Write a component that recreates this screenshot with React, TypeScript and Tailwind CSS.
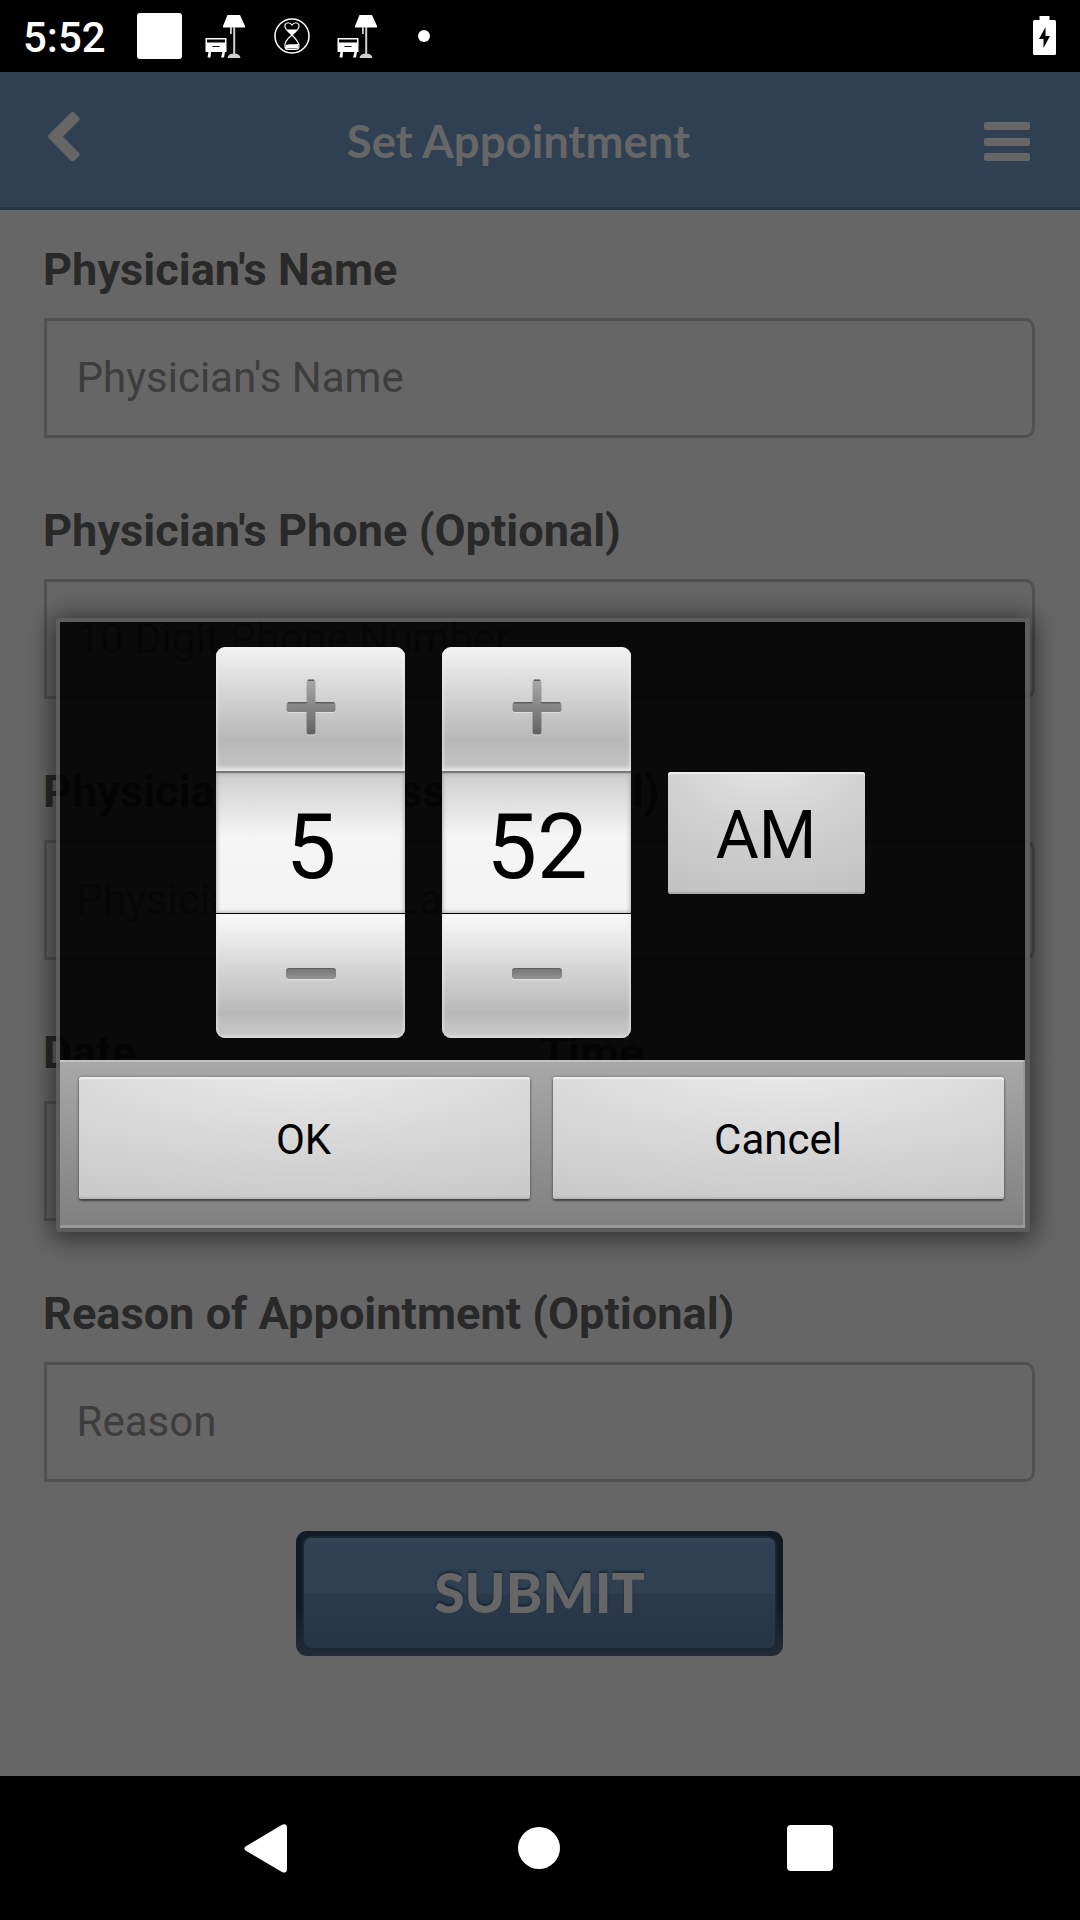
import React from "react";

function Lamp() {
  return (
    <svg width="42" height="44" viewBox="0 0 42 44" fill="white">
      <path d="M22.500 0H35L40 11V12.500H18V11Z" />
      <path d="M28.200 12H30.200V40H28.200ZM25 12H26.800V19H25ZM29 38.500C33 38.500 35 40 35.500 43H22.500C23 40 25 38.500 29 38.500Z" fill="#d0d0d0" />
      <path fillRule="evenodd" d="M0.500 23H21.500V37H20L19 42.500H16L17.500 37H6L5.500 42.500H2.500L3.500 37H0.500ZM2 24.500V27.500H20V24.500ZM7.500 31V32H14.500V31Z" />
    </svg>
  );
}

function Hourglass() {
  return (
    <svg width="38" height="38" viewBox="0 0 38 38" fill="none" stroke="white">
      <circle cx="19" cy="19" r="17" strokeWidth="1.500" />
      <path d="M19 18C14 14 11 11 12 8C13 5 17 5 19 8C21 5 25 5 26 8C27 11 24 14 19 18C14 22 11 26 12 30C12.500 32 14 32.500 15 32.500H23C25 32.500 26 31 26 29C26 26 23 22 19 18Z" strokeWidth="1.200" />
      <path d="M14 12.500H24C23 15 20.500 16 19 17.500C17.500 16 15 15 14 12.500ZM13 28C17 26.500 21 28 25 27V31.500H13Z" fill="white" stroke="none" />
    </svg>
  );
}

function StatusBar() {
  return (
    <div className="flex h-[72px] items-center bg-black pr-6 pl-[23px] text-white">
      <span className="w-[114px] pt-[3px] text-[42px] leading-none font-medium">5:52</span>
      <div className="h-[46px] w-[45px] rounded-[3px] bg-white" />
      <div className="ml-[23px] pt-0.5"><Lamp /></div>
      <div className="ml-[26px]"><Hourglass /></div>
      <div className="ml-[26px] pt-0.5"><Lamp /></div>
      <div className="ml-[39px] size-3 rounded-full bg-white" />
      <svg className="ml-auto" width="23" height="40" viewBox="0 0 23 40">
        <path d="M6.500 0H16.500V4H21.500Q23 4 23 5.500V37.500Q23 39 21.500 39H1.500Q0 39 0 37.500V5.500Q0 4 1.500 4H6.500Z" fill="white" />
        <path d="M12.500 11V20H17L10.500 32V23H6Z" fill="black" />
      </svg>
    </div>
  );
}

function Header() {
  return (
    <div className="flex h-[138px] items-center justify-between border-b-[3px] border-[#263543] bg-[#2f4052] pr-[50px] pl-12 text-[#666]">
      <svg className="mb-1.5" width="32" height="50" viewBox="0 0 32 50" fill="currentColor">
        <path d="M22.500 1Q24.500 -1 26.500 1L31 5.500Q32.500 7 31 8.500L15 24.500L31 41Q32.500 42.500 31 44L26.500 48.500Q24.500 50 22.500 48.500L0.500 26Q-.5 24.500 .5 23Z" />
      </svg>
      <h1 className="mt-0.5 mr-[27px] font-['Lato'] text-[45.500px] leading-none font-bold">Set Appointment</h1>
      <div className="mt-1 flex flex-col gap-[7.500px]">
        <div className="h-2 w-[46px] rounded-[2px] bg-[#666]" />
        <div className="h-2 w-[46px] rounded-[2px] bg-[#666]" />
        <div className="h-2 w-[46px] rounded-[2px] bg-[#666]" />
      </div>
    </div>
  );
}

function Field({ label, placeholder }: { label: string; placeholder: string }) {
  return (
    <div className="flex h-[261px] w-full shrink-0 flex-col">
      <div className="-ml-px h-[62px] pt-px text-[45.150px] leading-[53px] font-bold whitespace-nowrap text-[#292929]">{label}</div>
      <div className="mt-[14px] flex h-[120px] items-center rounded-r-[10px] border-[3px] border-[#515151] pb-0.5 pl-[29.500px] text-[42px] text-[#3d3d3d]">
        {placeholder}
      </div>
    </div>
  );
}

function Picker({ value }: { value: string }) {
  return (
    <div className="flex h-[391px] w-[189px] flex-col overflow-hidden rounded-[9px] text-black">
      <div className="flex h-[124px] shrink-0 items-center justify-center bg-linear-to-b from-[#f3f3f3] from-0% via-[#b7b7b7] via-75% to-[#c0c0c0] to-90% shadow-[inset_0_-5px_5px_-2px_#e8e8e8,inset_0_0_4px_#eee]">
        <svg className="mb-1 drop-shadow-[0_1.500px_0_#ddd]" width="50" height="56" viewBox="0 0 50 56">
          <defs>
            <linearGradient id="plus" x1="0" y1="0" x2="0" y2="1">
              <stop offset="0" stopColor="#aaa" /><stop offset="1" stopColor="#626262" />
            </linearGradient>
          </defs>
          <path d="M23 .5H27Q29.500 .5 29.500 3V23H47Q49.500 23 49.500 25.500V30.500Q49.500 33 47 33H29.500V53Q29.500 55.500 27 55.500H23Q20.500 55.500 20.500 53V33H3Q.5 33 .5 30.500V25.500Q.5 23 3 23H20.500V3Q20.500 .5 23 .5Z" fill="url(#plus)" />
          <path d="M2 23.800H20.500M29.500 23.800H48M22 1.200H28" stroke="#5c5c5c" strokeWidth="1.500" />
        </svg>
      </div>
      <div className="flex h-[142px] shrink-0 items-center justify-center border-t-2 border-[#777] bg-linear-to-b from-[#cecece] from-0% via-[#f5f5f5] via-45% to-[#f3f3f3] pt-2.5 pl-px text-[90px] leading-none shadow-[inset_0_0_5px_#999]">
        {value}
      </div>
      <div className="flex h-[125px] shrink-0 items-center justify-center border-t border-black bg-linear-to-b from-[#fafafa] from-0% via-[#b8b8b8] via-80% to-[#c6c6c6] to-95% shadow-[inset_0_-3px_4px_-1px_#ddd,inset_0_0_4px_#eee]">
        <div className="mb-[5px] h-[11px] w-[50px] rounded-[3px] border-t border-[#606060] bg-linear-to-b from-[#757575] to-[#949494] shadow-[0_1.500px_0_#ddd]" />
      </div>
    </div>
  );
}

function DialogButton({ children }: { children: string }) {
  return (
    <button className="flex h-[122px] w-[451px] items-center justify-center rounded-[3px] bg-[radial-gradient(120%_130%_at_50%_-10%,#eaeaea,#d9d9d9_45%,#c8c8c8_95%)] pt-[3px] pr-px text-[42px] text-black shadow-[inset_0_2px_1px_#f0f0f0,inset_0_-2px_1px_#b8b8b8,0_2px_2px_#444,0_0_3px_#666]">
      {children}
    </button>
  );
}

function TimeDialog() {
  return (
    <div className="absolute top-[618px] left-[56px] h-[614px] w-[974px] rounded-[4px] border-4 border-r-[5px] border-[#5c5c5c]/90 shadow-[0_3px_24px_5px_rgba(0,0,0,0.5)]">
      <div className="flex h-[438px] bg-black/90 pt-[25px] pl-[156px]">
        <Picker value="5" />
        <div className="ml-[37px]"><Picker value="52" /></div>
        <button className="mt-[125px] ml-[36.500px] flex h-[122px] w-[197px] items-center justify-center rounded-[3px] bg-[radial-gradient(110%_120%_at_50%_-10%,#e4e4e4,#d0d0d0_50%,#c2c2c2_100%)] pt-1.5 text-[66px] leading-none text-black shadow-[inset_0_2px_1px_#eee,inset_0_-2px_1px_#aaa]">
          AM
        </button>
      </div>
      <div className="absolute top-[438px] -left-[27px] h-px w-[1020px] bg-linear-to-r from-transparent via-[#888] to-transparent" />
      <div className="relative flex h-[168px] justify-between border-t-2 border-r-2 border-b-[3px] border-t-[#c2c2c2] border-r-[#9a9a9a] border-b-[#999] bg-linear-to-b from-[#a8a8a8] to-[#808080] pt-[15px] pr-[19px] pl-[18.500px]">
        <DialogButton>OK</DialogButton>
        <DialogButton>Cancel</DialogButton>
      </div>
    </div>
  );
}

export default function App() {
  return (
    <div className="relative flex h-[1920px] w-[1080px] flex-col overflow-hidden bg-[#666] font-['Roboto',sans-serif]">
      <StatusBar />
      <Header />
      <main className="flex flex-1 flex-col px-11 pt-8">
        <div className="flex w-[991px] flex-col">
          <Field label="Physician's Name" placeholder="Physician's Name" />
          <Field label="Physician's Phone (Optional)" placeholder="10 Digit Phone Number" />
          <Field label="Physician's Address (Optional)" placeholder="Physician's Suite La" />
          <div className="grid w-[954px] grid-cols-2 gap-x-[40px]">
            <Field label="Date" placeholder="" />
            <Field label="Time" placeholder="" />
          </div>
          <Field label="Reason of Appointment (Optional)" placeholder="Reason" />
        </div>
        <button className="-mt-[16px] ml-[252px] h-[125px] w-[487px] shrink-0 rounded-[11px] bg-linear-to-b from-[#111b25] from-60% to-[#232c36] px-1.5 pt-[5px] pb-1.5">
          <span className="flex h-full items-center justify-center rounded-[9px] border-2 border-[#1a2735] bg-[linear-gradient(#35465a_0,#2f4052_8%,#2f4052_50%,#2a3a4b_51%,#263543)] font-['Lato'] text-[55.200px] leading-none font-black text-[#666] [text-shadow:0_-2px_2px_#1a2735]">
            SUBMIT
          </span>
        </button>
      </main>
      <footer className="flex h-36 items-center justify-between bg-black pr-[247px] pl-[244px]">
        <svg width="43" height="49" viewBox="0 0 43 49" fill="white">
          <path d="M38 .7Q43 -1 43 4V45Q43 50 38 48L1.500 26.500Q-.8 24.500 1.500 22.500Z" />
        </svg>
        <div className="ml-[3px] size-[42px] rounded-full bg-white" />
        <div className="size-[46px] rounded-[4px] bg-white" />
      </footer>
      <TimeDialog />
    </div>
  );
}
